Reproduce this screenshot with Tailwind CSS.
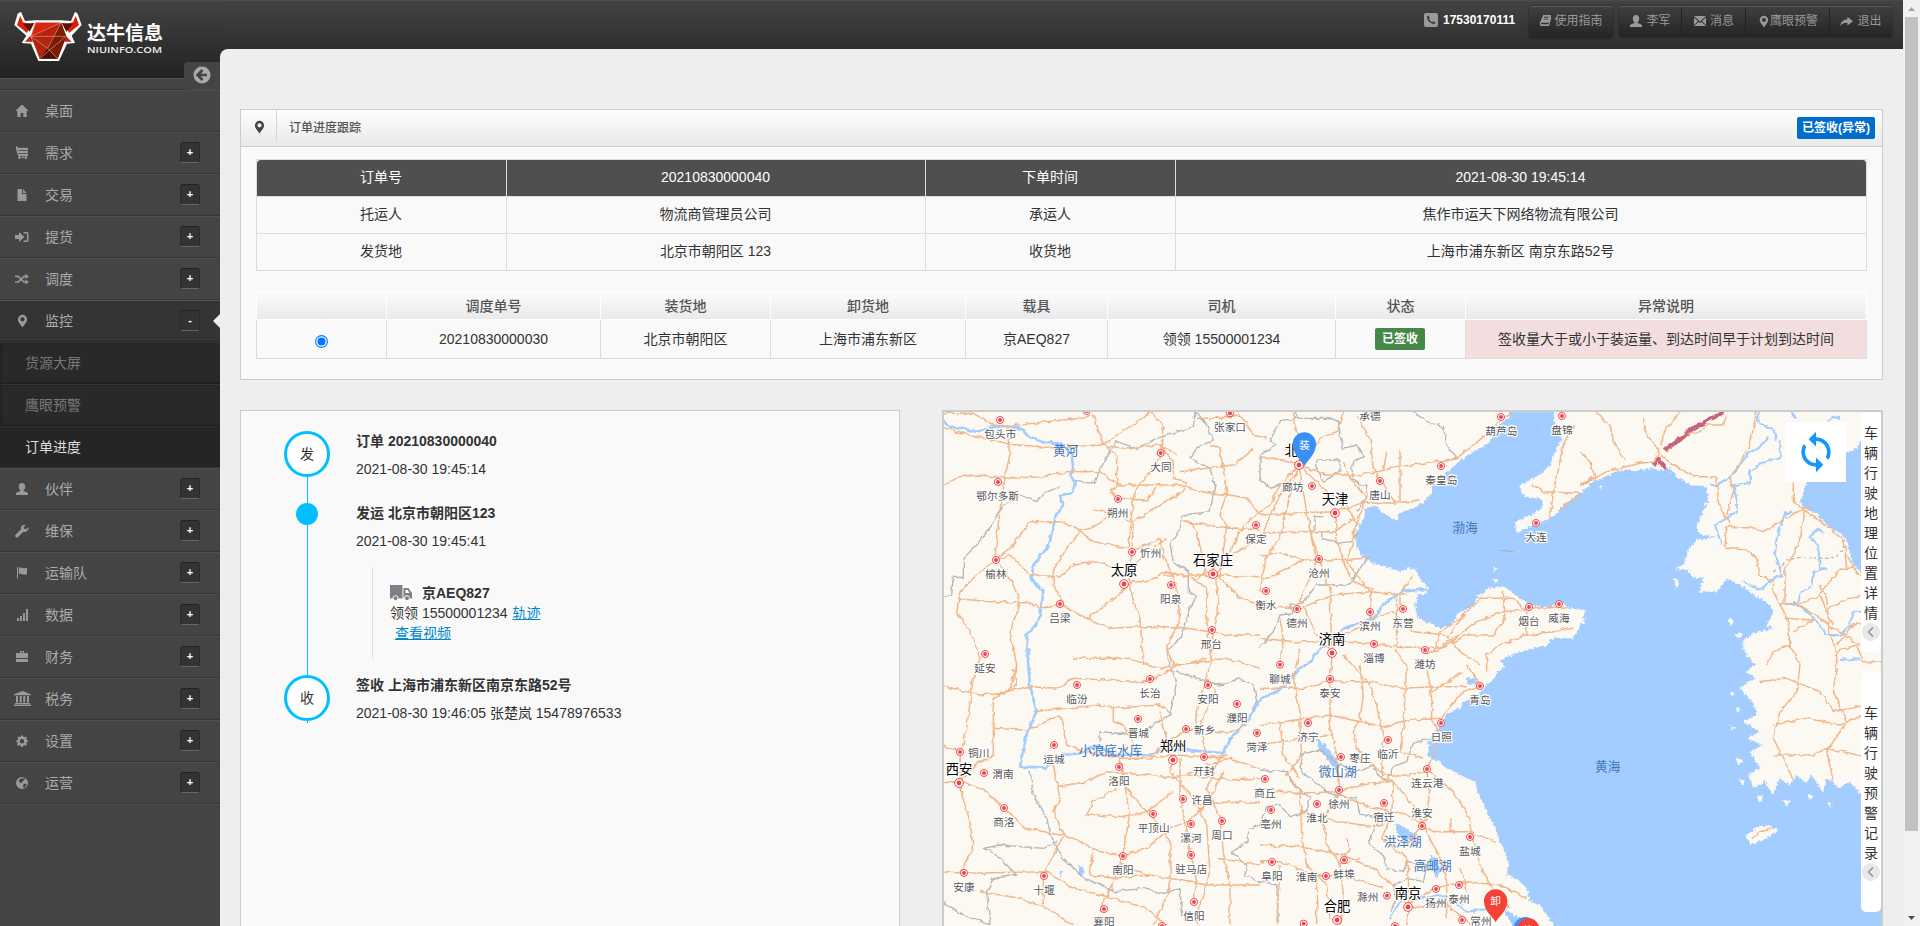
<!DOCTYPE html>
<html lang="zh-CN">
<head>
<meta charset="utf-8">
<title>订单进度跟踪</title>
<script src="https://cdn.jsdelivr.net/npm/@tailwindcss/browser@4"></script>
</head>
<body class="w-[1920px] h-[926px] overflow-hidden bg-[#eee] text-[14px] leading-[20px] text-[#333] font-['Liberation_Sans','Noto_Sans_CJK_SC',sans-serif]">
<svg class="hidden">
  <symbol id="i-home" viewBox="0 0 14 14"><path d="M7 .5 .3 7h2v6h3.400V9h2.600v4h3.400V7h2z"/></symbol>
  <symbol id="i-cart" viewBox="0 0 14 14"><path d="M.8 0h1.300l.6 1.800H13v2.400H3.300v.8H13v2.200H3.500v.8H13v2H3L1 3z"/><circle cx="4.500" cy="11.500" r="1.500"/><circle cx="7.800" cy="11.300" r="1.100"/><circle cx="10.800" cy="11.500" r="1.500"/></symbol>
  <symbol id="i-file" viewBox="0 0 14 14"><path d="M2.500 1H7v5h4.500v7h-9z"/><path d="M8 1l3.500 4H8z"/></symbol>
  <symbol id="i-signin" viewBox="0 0 14 14"><path d="M0 5h4V2l5.500 5L4 12V9H0z"/><path d="M8.500 2H12q1.500 0 1.500 1.500v7Q13.500 12 12 12H8.500v-1.500H12v-7H8.500z"/></symbol>
  <symbol id="i-shuffle" viewBox="0 0 15 14"><path d="M0 4.200h3.500l6 6h2" fill="none" stroke="currentColor" stroke-width="1.800"/><path d="M0 10.200h3.500l6-6h2" fill="none" stroke="currentColor" stroke-width="1.800"/><path d="M11 1.500l4 2.800-4 2.700zM11 7.500l4 2.700-4 2.800z"/></symbol>
  <symbol id="i-pin" viewBox="0 0 14 14"><path fill-rule="evenodd" d="M7.500.8a4.600 4.600 0 0 0-4.600 4.600c0 2.800 3 5 4.600 8 1.600-3 4.600-5.200 4.600-8A4.600 4.600 0 0 0 7.500.8zm0 2.400a2.100 2.100 0 1 1 0 4.200 2.100 2.100 0 0 1 0-4.200z"/></symbol>
  <symbol id="i-user" viewBox="0 0 14 14"><path d="M7 1c2 0 3.200 1.300 3.200 3.400 0 1.600-.6 3-1.500 3.700v1c1 .8 4.300 1.200 4.300 2.500V13H1v-1.400c0-1.300 3.300-1.700 4.300-2.500v-1C4.400 7.400 3.800 6 3.800 4.400 3.800 2.300 5 1 7 1z"/></symbol>
  <symbol id="i-wrench" viewBox="0 0 14 14"><path d="M13.300 3.200 11 5.300 9 4.700 8.600 3 10.900.9C9.200.2 7 .9 6.200 2.600c-.4 1-.4 1.800-.1 2.700L.7 10.500a1.700 1.700 0 0 0 2.500 2.500l5.200-5.200c1 .3 2 .2 3-.3 1.700-.8 2.400-2.600 1.900-4.300z"/></symbol>
  <symbol id="i-flag" viewBox="0 0 14 14"><path d="M2 1h1v11.500H2zM3.800 1.800c2.500-1.300 4 1.400 8.200 0v6.400c-4 1.500-5.700-1.300-8.200 0z"/></symbol>
  <symbol id="i-signal" viewBox="0 0 14 14"><path d="M2 10h2v3H2zM5 8h2v5H5zM8 5h2v8H8zM11 1h2v12h-2z"/></symbol>
  <symbol id="i-case" viewBox="0 0 14 14"><path fill-rule="evenodd" d="M5 3V1h4v2h4v5H1V3zm1 0h2V2H6zM1 9h12v3H1z"/></symbol>
  <symbol id="i-bank" viewBox="0 0 17 15"><path d="M8.500 0 17 3.200v1H0v-1zM2 5h2v6.500H2zM5.700 5h2v6.500h-2zM9.300 5h2v6.500h-2zM13 5h2v6.500h-2zM1 12h15v1H1zM0 13.500h17V15H0z"/></symbol>
  <symbol id="i-cog" viewBox="0 0 14 14"><path fill-rule="evenodd" d="M6 1.500h2l.4 1.300 1 .4 1.400-.7 1.200 1.300-.7 1.300.4 1L13 6.300v1.500l-1.300.5-.4 1 .7 1.300-1.300 1.200-1.300-.6-1 .4L8 13H6l-.4-1.400-1-.4-1.400.6L2 10.600l.7-1.300-.4-1L1.500 8V6.300l1.200-.4.4-1L2.500 3.700 3.700 2.500l1.200.6 1-.3zM7 5a2.200 2.200 0 1 0 0 4.400A2.200 2.200 0 0 0 7 5z"/></symbol>
  <symbol id="i-globe" viewBox="0 0 14 14"><path fill-rule="evenodd" d="M7 1a6 6 0 1 1 0 12A6 6 0 0 1 7 1zM6 2.500l3.500-.2 1.200 1-1.700.5L8 5.500 6.500 6l.2 1.200-2.400-1L4 4zM8.500 8l2.800-.5.4 1.500-2.500 3-1-.5z"/></symbol>
  <symbol id="i-book" viewBox="0 0 14 14"><path fill-rule="evenodd" d="M4.500 1H13L10.800 9.500H3q-1.300.2-1 1.500h8.300L12.500 3l.8.500L11 13H2Q.3 12.500.8 10zM5.500 3l-.3 1h5l.3-1zM5 5l-.3 1h5l.3-1z"/></symbol>
  <symbol id="i-mail" viewBox="0 0 14 14"><path d="M1 2h12L7 7.500zM1 3.500 5 7 1 11zM13 3.500 9 7l4 4zM5.700 7.700 7 8.900l1.300-1.200L13 12H1z"/></symbol>
  <symbol id="i-share" viewBox="0 0 14 14"><path d="M8 2l6 4.700-6 4.600V8.500C4.500 8.300 2 9 .5 12 .8 7.500 3.500 5 8 4.700z"/></symbol>
</svg>

<div class="flex h-[926px] w-[1920px]">
  <!-- sidebar -->
  <aside class="relative h-full w-[220px] shrink-0 bg-[#444]">
    <div class="flex h-[78px] bg-linear-to-b from-[#434343] to-[#222] pl-[13px] pt-[10px] border-t border-[#4c4c4c]">
      <svg class="h-[52px] w-[70px] shrink-0" viewBox="0 0 210 156">
        <path d="M24 2 36 30 68 28H144L174 30 186 2 194 8 206 42 176 74 186 96 162 98 138 150H76L54 98 26 96 40 74 4 42 14 8z" fill="#fff"/>
        <path d="M22 14 30 34 54 40 42 66 12 42zM188 14 180 34 156 40 168 66 198 42z" fill="#d8200c"/>
        <path d="M30 38 64 36 50 62zM180 38 146 36 160 62z" fill="#5a1306"/>
        <path d="M52 74 36 92H60zM158 74 176 92H154z" fill="#c42412"/>
        <path d="M68 35H144L160 76 134 143H80L54 76z" fill="#b02410"/>
        <path d="M68 35H144L54 76z" fill="#d9240f"/><path d="M144 35 160 76 134 143 104 112z" fill="#7a1d04"/><path d="M80 143 104 112 134 143z" fill="#4a1206"/>
        <path d="M54 76 144 35 104 112zM54 76H158L80 143M104 112 134 143M68 35 54 76" fill="none" stroke="#e8907c" stroke-width="2"/>
      </svg>
      <svg class="h-[60px] w-[82px]" viewBox="0 0 82 60"><text x="4" y="28.500" font-size="19" font-weight="700" textLength="76" fill="#fff">达牛信息</text><text x="4" y="42" font-size="8.500" font-weight="600" textLength="75" lengthAdjust="spacingAndGlyphs" fill="#eee" font-family="Open Sans, sans-serif">NIUINFO.COM</text></svg>
    </div>
    <div class="h-[12px] border-b border-t border-b-[#363636] border-t-[#555]"></div>
    <nav id="menu" class="border-b border-[#4f4f4f]"></nav>
    <div class="absolute left-[184px] top-[62px] flex h-[28px] w-[36px] items-center justify-center rounded-l-[4px] bg-[#444] pb-[2px]">
      <svg class="size-[18px]" viewBox="0 0 18 18"><circle cx="9" cy="9" r="8.500" fill="#aaa"/><path d="M9.500 4 4.500 9l5 5M5 9h9" fill="none" stroke="#444" stroke-width="2.600"/></svg>
    </div>
  </aside>

  <div class="flex h-full w-[1683px] flex-col bg-[#eee] bg-[linear-gradient(#434343,#222)] bg-[length:100%_78px] bg-no-repeat">
    <!-- top bar -->
    <header class="flex h-[49px] shrink-0 items-start justify-end border-t border-[#4c4c4c] pr-[11px] text-[12px] text-[#999]">
      <div class="mr-[14px] flex h-[37px] items-center gap-[5px] font-bold text-white">
        <svg class="size-[14px]" viewBox="0 0 14 14"><rect width="14" height="14" rx="2" fill="#999"/><path d="M4.200 2.500 3 3.600c-.3 3.800 3.700 7.800 7.500 7.500l1-1.300-2.200-1.500-1.200.9C6.800 8.500 5.700 7.400 5 6l.9-1.200z" fill="#3a3a3a"/></svg>
        <span class="w-[72px]">17530170111</span>
      </div>
      <a class="mr-[6px] mt-[5px] flex h-[32px] w-[84px] items-center justify-center gap-[2px] rounded-[3px] border-t border-[#5a5a5a] bg-linear-to-b from-[#3f3f3f] to-[#242424] pb-[4px] shadow-[0_0_2px_#1a1a1a]"><svg class="size-[13px] fill-current"><use href="#i-book"/></svg>使用指南</a>
      <div class="mt-[5px] flex h-[31px] rounded-[3px] border-t border-[#5a5a5a] bg-linear-to-b from-[#3f3f3f] to-[#242424] shadow-[0_0_2px_#1a1a1a] *:pb-[2px]">
        <a class="flex w-[63px] items-center justify-center gap-[3px] border-r border-[#222]"><svg class="size-[14px] fill-current"><use href="#i-user"/></svg>李军</a>
        <a class="flex w-[64px] items-center justify-center gap-[3px] border-r border-[#222]"><svg class="size-[14px] fill-current"><use href="#i-mail"/></svg>消息</a>
        <a class="flex w-[84px] items-center justify-center border-r border-[#222]"><svg class="size-[13px] fill-current"><use href="#i-pin"/></svg>鹰眼预警</a>
        <a class="flex w-[62px] items-center justify-center gap-[4px]"><svg class="size-[13px] fill-current"><use href="#i-share"/></svg>退出</a>
      </div>
    </header>

    <main class="min-h-0 flex-1 overflow-hidden rounded-tl-[8px] bg-[#eee] pl-[20px] pt-[60px]">
      <!-- order summary -->
      <section class="h-[271px] w-[1643px] border border-[#ccc] bg-[#f9f9f9]">
        <div class="flex h-[37px] border-b border-[#ccc] bg-linear-to-b from-[#fdfdfd] to-[#e9e9e9]">
          <div class="flex h-[31px] w-[36px] items-center justify-center border-r border-[#d5d5d5] pt-[3px] pl-[1px]"><svg class="size-[14px] fill-[#444]"><use href="#i-pin"/></svg></div>
          <h5 class="pl-[12px] pt-[8px] text-[12px] font-medium text-[#555]">订单进度跟踪</h5>
          <span class="ml-auto mr-[7px] mt-[7px] flex h-[22px] w-[78px] items-center justify-center rounded-[2px] bg-[#006dcc] text-[12px] font-bold text-white">已签收(异常)</span>
        </div>
        <div class="px-[15px] pt-[12px]">
          <div class="grid w-[1611px] grid-cols-[250px_419px_250px_691px] border-l border-t border-[#ddd] text-center *:h-[37px] *:border-b *:border-r *:border-[#ddd] *:pr-[1px] *:pt-[7px]">
            <div class="rounded-tl-[4px] bg-[#4f4f4f] text-white">订单号</div><div class="bg-[#4f4f4f] text-white">20210830000040</div><div class="bg-[#4f4f4f] text-white">下单时间</div><div class="rounded-tr-[4px] bg-[#4f4f4f] text-white">2021-08-30 19:45:14</div>
            <div>托运人</div><div>物流商管理员公司</div><div>承运人</div><div>焦作市运天下网络物流有限公司</div>
            <div>发货地</div><div>北京市朝阳区 123</div><div>收货地</div><div>上海市浦东新区 南京东路52号</div>
          </div>
          <div class="mt-[20px] w-[1611px]">
            <div class="grid h-[29px] grid-cols-[130px_214px_170px_195px_142px_228px_130px_401px] border-l border-t border-white bg-linear-to-b from-[#fcfcfc] to-[#e9e9e9] text-center font-medium text-[#555] *:border-b *:border-r *:border-white *:pt-[4px]">
              <div></div><div>调度单号</div><div>装货地</div><div>卸货地</div><div>载具</div><div>司机</div><div>状态</div><div>异常说明</div>
            </div>
            <div class="grid h-[39px] grid-cols-[130px_214px_170px_195px_142px_228px_130px_401px] border-l border-[#ddd] text-center *:border-b *:border-r *:border-[#ddd] *:pt-[9px]">
              <div class="flex justify-center"><svg class="mt-[6px] size-[13px]" viewBox="0 0 13 13"><circle cx="6.500" cy="6.500" r="5.900" fill="#fff" stroke="#0075ff" stroke-width="1.100"/><circle cx="6.500" cy="6.500" r="4" fill="#0075ff"/></svg></div>
              <div>20210830000030</div><div>北京市朝阳区</div><div>上海市浦东新区</div><div>京AEQ827</div><div>领领 15500001234</div>
              <div class="flex justify-center pr-[1px]"><span class="-mt-[1px] flex h-[22px] w-[50px] items-center justify-center rounded-[2px] bg-[#468847] text-[12px] font-bold text-white">已签收</span></div>
              <div class="bg-[#f2dede]">签收量大于或小于装运量、到达时间早于计划到达时间</div>
            </div>
          </div>
        </div>
      </section>

      <div class="mt-[30px] flex">
        <!-- timeline -->
        <section class="flex h-[540px] w-[660px] border border-[#ccc] bg-[#f9f9f9] pl-[43px] pt-[20px]">
          <div class="flex w-[46px] flex-col items-center">
            <div class="flex size-[46px] items-center justify-center rounded-full border-[3px] border-[#00bfff] bg-white">发</div>
            <div class="h-[26px] w-px bg-[#00bfff]"></div>
            <div class="size-[22px] rounded-full bg-[#00bfff]"></div>
            <div class="h-[150px] w-px bg-[#00bfff]"></div>
            <div class="flex size-[46px] items-center justify-center rounded-full border-[3px] border-[#00bfff] bg-white">收</div>
            <div class="h-[2px] w-px bg-[#00bfff]"></div>
          </div>
          <div class="pl-[26px]">
            <b class="block">订单 20210830000040</b>
            <p class="mt-[8px]">2021-08-30 19:45:14</p>
            <b class="mt-[24px] block">发运 北京市朝阳区123</b>
            <p class="mt-[8px]">2021-08-30 19:45:41</p>
            <div class="ml-[16px] mt-[16px] h-[92px] border-l border-[#ddd] pl-[17px] pt-[16px]">
              <div class="flex items-center"><svg class="mr-[10px] h-[16px] w-[22px]" viewBox="0 0 22 16"><rect width="22" height="16" fill="#fff"/><path fill-rule="evenodd" d="M0 0h12.500v13.500H0zM13.500 3h5L22 8v5.500h-8.500zm2 2v3h4l-1.800-3z" fill="#7d8187"/><circle cx="5.500" cy="13.200" r="2.500" fill="#7d8187" stroke="#fff"/><circle cx="17" cy="13.200" r="2.500" fill="#7d8187" stroke="#fff"/></svg><b>京AEQ827</b></div>
              <p>领领 15500001234 <a class="ml-[1px] text-[#08c] underline">轨迹</a></p>
              <p class="pl-[5px]"><a class="text-[#08c] underline">查看视频</a></p>
            </div>
            <b class="mt-[16px] block">签收 上海市浦东新区南京东路52号</b>
            <p class="mt-[8px]">2021-08-30 19:46:05 张楚岚 15478976533</p>
          </div>
        </section>

        <!-- map -->
        <section class="relative ml-[42px] h-[540px] w-[941px] border-2 border-[#ccc] bg-[#fcf9f2]">
          <svg class="block h-[514px] w-[937px]" viewBox="944 412 937 514">
            <defs>
              <filter id="rough" x="0" y="0" width="1" height="1"><feTurbulence type="fractalNoise" baseFrequency=".12" numOctaves="3" seed="4"/><feDisplacementMap in="SourceGraphic" scale="16" xChannelSelector="R" yChannelSelector="G"/></filter>
              <filter id="wobble" x="0" y="0" width="1" height="1"><feTurbulence type="fractalNoise" baseFrequency=".05" numOctaves="2" seed="9"/><feDisplacementMap in="SourceGraphic" scale="14" xChannelSelector="R" yChannelSelector="G"/></filter>
            </defs>
            <g transform="translate(1260 405) scale(.33333)">
              <g filter="url(#rough)" fill="#a3ccff">
                <path d="M750 0 745 40 715 60 705 90 680 120 640 140 610 160 550 210 520 230 515 265 490 290 460 310 430 320 410 330 415 345 400 345 385 330 365 325 355 305 335 300 315 315 310 345 295 365 285 400 290 430 310 455 340 475 380 485 420 500 440 490 465 492 480 520 505 550 500 565 475 570 465 600 475 640 510 655 540 670 575 660 595 625 640 605 650 575 690 550 735 545 765 570 795 590 830 605 870 605 900 590 930 610 978 616 965 640 958 670 940 700 880 700 860 720 800 735 755 750 720 765 735 785 710 800 705 820 680 840 650 875 610 890 600 910 560 925 545 955 520 990 505 1015 505 1055 540 1070 560 1090 600 1110 645 1130 655 1165 680 1220 705 1270 720 1310 735 1340 745 1380 740 1410 775 1425 800 1450 810 1490 840 1500 860 1530 900 1590H1900V1200L1804 1170 1770 1130 1740 1150 1700 1120 1690 1165 1655 1110 1640 1135 1610 1110 1590 1140 1560 1120 1540 1170 1515 1130 1480 1150 1465 1110 1500 1090 1470 1040 1510 1020 1460 1000 1500 980 1450 950 1490 930 1480 897 1440 850 1485 820 1460 800 1485 780 1450 735 1450 705 1480 685 1540 670 1520 660 1540 620 1520 590 1480 570 1450 545 1400 520 1370 560 1320 560 1330 520 1295 520 1290 500 1245 490 1275 475 1280 440 1310 405 1370 395 1325 390 1310 375 1320 340 1345 290 1340 245 1290 240 1250 215 1230 190 1200 195 1175 190 1140 195 1090 195 1060 205 1000 230 960 265 910 300 890 325 870 340 820 360 785 375 768 385 765 350 800 335 830 320 850 300 840 280 805 280 785 265 780 240 810 225 840 210 870 180 885 140 905 100 895 80 880 40 890 0z"/>
                <path d="M1810 100 1790 130 1760 145 1650 150 1640 235 1620 290 1640 315 1670 325 1700 360 1755 395 1780 480 1830 530V100z"/>
                <path d="M170 1000 190 1015 215 1045 240 1080 230 1100 200 1060 175 1030zM405 1255 425 1260 450 1280 470 1290 440 1310 415 1290zM510 1350 530 1360 545 1395 530 1420 515 1390zM-545 1380-530 1385-530 1410-545 1410zM-600 1395-590 1400-600 1420zM620 820 650 820 650 840 625 838zM730 1510 800 1550 860 1570H760z"/>
                <g fill="#fcf9f2"><path d="M1455 1295 1490 1265 1530 1262 1555 1275 1520 1300 1475 1318zM1405 640l20 8-15 14zM1425 690l22-6-8 20zM940 440l20 3zM1240 520l18 4-8 26zM700 485l10 6-6 10zM695 520l18 4-8 12zM960 645l18-10-8 22zM1330 290l12 8-10 6zM1015 243l12 0-4 8zM1425 905l20 4-12 14zM1410 960l16 8-10 12zM1430 1060l18 6-12 14zM1440 1120l18 10-14 16zM1490 1175l20-4-6 20zM1570 1185l22 4-14 14zM1640 1165l20 8-10 14zM1410 860l14 4-8 10zM1700 1190l18 4-8 14z"/></g>
              </g>
              <g filter="url(#wobble)" fill="none" stroke-linejoin="round">
                <!-- rivers -->
                <g stroke="#a3ccff" stroke-width="8">
                  <path d="M-960 40-930 65-850 80-810 65-725 68-690 95-650 112-590 120-565 150-560 190-570 210-555 235-565 265-600 270-590 300-615 340-620 370-640 430-680 480-685 520-650 560-655 600-665 650-700 690-695 780-690 840-670 920-705 1000-720 1085-640 1088-600 1050-540 1045-490 1020-440 1050-320 1048-290 1030-110 1044-80 990-40 950 5 880 70 850 110 800 150 770 180 730 250 670 340 640 380 590 430 560 500 552"/>
                  <path stroke-width="6" d="M1500 20 1492 50 1540 75 1550 105M1525 95 1500 125 1465 145 1410 220 1370 240 1350 240M1562 105 1560 160 1500 175 1470 200 1470 235 1420 240 1432 290 1430 320 1365 360 1385 420M1595 320 1575 325 1550 400 1545 450 1560 490 1565 510 1525 530 1505 555 1450 530M1695 385 1670 370 1650 395 1675 425 1680 490 1700 490 1660 500 1655 540 1625 560 1610 600 1570 595M1600 590 1640 620 1670 650 1700 690 1740 690 1770 660 1780 620 1810 620M1590 10 1605 40M1700 50 1720 35 1740 40M1740 765 1800 760M390 1540 420 1490 480 1480 560 1470 620 1520 700 1510"/>
                </g>
                <!-- provincial boundaries -->
                <g stroke="#b4b6b8" stroke-width="4">
                  <path d="M-195 20-200 65-310 100-370 130-430 110-480 190-495 235-555 230M-600 245-650 265-670 290-720 270-770 300-800 350-850 420-890 460-890 520-920 510-925 570-960 575M-195 20-160 60-140 105-190 130-210 160-150 190-135 240-150 320-230 330-240 370-270 420-260 470-215 500-215 560-190 570-220 640-240 700-280 740-270 780-250 830-270 930-320 960-360 990-480 980-480 1010M-690 1100-680 1170-640 1240-620 1310-590 1360-530 1420-470 1440-440 1460-350 1450-290 1465-240 1450-235 1530M-610 1310-650 1330-780 1320-830 1330-790 1350-730 1410-800 1420-820 1460-810 1560-890 1530-960 1490M-255 800-120 840-60 820-20 840-10 890-30 930"/>
                  <path d="M110 20 110 40 200 40 235 45 240 90 250 130 290 120 310 155 280 170 275 220 300 240 320 240 320 280 290 320M30 100 60 50 110 40M30 100 50 120 0 150 0 220 30 250 75 230M170 165 240 165 240 200 190 230 170 190zM165 335H185V330M165 335V380H185V400L240 415 280 405 290 380M460 20 500 50 550 65 560 120 590 160M325 455 300 490 280 520 270 540H170L130 590 90 600 100 625 60 630 40 680 0 725M510 1000 460 1015 440 1070 400 1085 380 1130 355 1110 340 1080 280 1100 210 1060 180 1035 130 1045 120 1090 140 1110 190 1150 210 1170 290 1180 300 1230 360 1240 335 1290 330 1320 370 1350 380 1390 430 1400 440 1370 500 1380 490 1430 440 1420 400 1440 410 1480 390 1520M0 1095 80 1100 90 1130 150 1180 140 1220 90 1235 60 1200 20 1205 0 1260-30 1270-40 1310-85 1340-40 1380-45 1410 0 1430 50 1440 55 1550"/>
                  <path d="M1540 500 1555 490 1580 465 1620 457 1700 460 1730 455 1750 430 1752 405" stroke-dasharray="9 8"/>
                </g>
                <path d="M1390 22 1345 45 1300 70 1280 85 1250 110 1215 135M1180 180 1195 160 1215 190" stroke="#c76578" stroke-width="12"/>
                <!-- roads -->
                <g stroke="#f1b78b" stroke-width="4.400">
                  <path d="M-960 65-870 90-750 118-620 128-480 120-410 130-300 120-250 150M-960 245-900 215-840 210-760 220-650 215-580 200-480 200-430 240-240 240-180 260-90 270-40 280 0 330M-950 25-860 25-800 60-760 65-640 50-540 40-500 30-470 120-430 150-430 240-445 260-430 280-340 285-300 235M-760 60-750 150-770 230-790 400-795 465-850 510-900 560-910 620-860 700-840 760-860 820-880 970-900 1060-900 1150-870 1250-860 1330-900 1400-890 1410M-795 465-740 420-690 350-600 350-540 375-490 360-440 320M-795 465-750 450-690 510-600 515-560 480-480 470-440 490-380 480-340 445-280 400M-780 480-740 540-720 590-750 680-730 780-750 850M-910 580-820 590-700 590-660 610-590 600-520 640-450 670-350 665-250 665-150 680-100 690 0 690M-590 590-620 540-620 500-580 430-540 380-500 410-440 420-400 430M-395 430-380 280-370 250-300 160-290 60-330 20M-470 120-380 60-330 20M-300 120-260 170-260 220-220 230-230 260-280 290-380 350M-500 310-380 350-385 440-390 530-380 590-360 640-350 780M-385 440-300 400-290 450-250 540-240 650-280 720-260 780M-290 510-200 510-150 515-130 510 0 515M-520 640-450 590-380 530-340 530-280 500-200 520-160 550-160 640-150 740M-160 515-190 380-200 360-230 350M-230 350-120 365 0 375M-190 40-120 40-60 30-20 90 20 100M-130 510-80 420-50 360 0 320M-130 510-125 620-140 680-150 780-180 880-200 980M-130 510-60 580 0 600M-120 520-100 360-120 330-100 260-120 130-150 120M-200 530-100 460 0 400 60 270 110 200M-240 200-160 190-80 180-20 130M-960 1020-900 1040-890 1130-960 1130M-900 1130-850 1080-800 1050-800 980-800 880-730 840-740 790M-960 840-840 870-760 860-700 845-600 850-560 820-460 825-340 830-240 780-160 760M-680 920-580 910-480 900-440 910-300 900-270 920M-800 970-700 975-600 930-580 1020-530 1040-420 1060-340 1060-260 1050-160 1055-100 1060 0 1090M-890 1130-820 1160-770 1210-700 1270-600 1290-560 1300-480 1340-410 1350-340 1330-270 1270-220 1250-150 1190-110 1100M-620 1080-600 1180-620 1220-590 1290-640 1390-650 1410-650 1500M-610 1145-520 1130-460 1100-340 1110-260 1120-200 1100-160 1080-80 1060M-420 1060-400 1150-360 1200-290 1270-270 1320-270 1450-320 1560M-420 1070-390 1220-410 1340-410 1350-440 1430-480 1520M-260 1060-270 1100-200 1180-160 1260-150 1400-180 1500-190 1560M-240 1060-240 1160-220 1290-190 1430-200 1500M-520 1230-500 1190-430 1150M-520 1230-400 1235-340 1220-260 1160M-960 1400-880 1405-640 1400-560 1450-440 1480-340 1510-280 1560M-840 1460-720 1480-640 1510-560 1560M-500 1340-510 1410-440 1420-330 1410-160 1440 0 1440M-420 1380-330 1410M-130 1360 0 1380M-120 1060-160 1150-120 1240-110 1340-90 1450-90 1560M-560 760-400 760-300 790-250 780-100 760 0 790M-300 920-280 1000-330 1060M-440 910-440 950-410 960-380 1020M-280 1010-220 975-180 970-100 985-40 960M-130 850-180 960-160 1060-100 1050M-220 1110-90 1125 0 1120M-200 1200-80 1190 0 1195"/>
                  <path d="M117 180 60 240 30 300 0 320M117 180 90 270 60 400 20 450 0 560M117 180 130 260 150 380 170 440 210 560 215 730M117 180 200 260 260 300 290 360M117 180 200 210 300 210 420 185 520 170 590 160 690 80 750 20M117 180 40 160 0 160M117 180 110 80 100 20M117 180 180 100 230 80 250 20M290 30 330 100 340 190 370 240 410 300M420 130 420 290M380 140 370 200M250 170 270 220 320 280 300 330 280 380 280 420 260 470 290 510 330 560 330 650M0 330 90 325 225 320 320 290 400 295 480 285M0 385 110 380 225 380 280 340M0 450 60 445 130 465 220 465 320 460M0 530 60 500 130 465M0 600 120 610 220 570 330 560 440 570M130 600 170 690 216 744M110 610 170 470 150 380M225 325 230 400 250 470 280 530 340 555M0 700 110 710 216 710 330 715 440 730 540 725 600 690 650 650 730 620 840 610 930 605M60 780 70 700 60 640M330 655 220 700M330 640 400 620 460 680 560 690 600 740 660 780M410 580 410 740 440 780M460 510 420 570 420 600M560 700 620 620 660 580 760 580 800 620 800 690 720 720 680 750 680 800M730 560 735 640 700 690 620 690 560 720 500 750M800 690 880 680 940 670M520 740 540 680 620 630M120 730 100 820 120 920 120 960 125 1050 80 1110 120 1160 125 1290 140 1380 200 1440 210 1540M0 850 130 850 210 830 330 830 420 850 520 845 620 845M216 750 210 830 210 960 230 1050 240 1160 190 1240 200 1320 240 1380 250 1470 240 1560M250 750 330 840 350 900 370 1000 365 1120 400 1130 395 1230 365 1300 440 1360 450 1500 440 1560M440 780 430 960 420 1040 490 1060M500 780 515 880 515 940 540 1000 500 1090M515 860 610 800M0 960 70 950 210 930 300 950 370 965 460 945 540 940M540 940 610 860 660 840M300 780 310 870 300 940 280 980 290 1030 370 1110 440 1110 500 1100M400 1130 460 1200 500 1280 540 1360 560 1430 560 1540M400 1130 300 1140 240 1160 100 1165 0 1150M240 1170 340 1210 440 1230 520 1280 620 1280 710 1310M510 1100 580 1160 630 1240 640 1300 660 1380 700 1460 750 1510M500 1090 510 1180 500 1240 440 1320M0 1320 120 1325 250 1350 340 1390 420 1460 440 1500M0 1370 60 1370 160 1410 280 1420 370 1450M60 1380 50 1560M120 1220 240 1250 340 1265 370 1260M440 1500 520 1450 620 1430 720 1440 800 1480M440 1510 560 1500 640 1560M570 1240 570 1280M600 1390 620 1450 610 1500M240 1380 300 1360M0 1020 60 1010 140 1000 220 990M60 950 70 1050 120 1120M170 1560 170 1400M260 1300 270 1330 250 1370M620 780 660 840"/>
                  <path d="M960 140 990 170 1005 215 960 240M960 245 1040 200 1140 175 1180 170 1200 135 1160 90 1150 40M1010 20 1050 60 1060 110 1095 170M1200 150 1240 180 1300 215 1370 215 1375 290 1400 340 1410 360M1205 130 1210 80 1260 20M1280 85 1320 80 1340 60 1390 60 1400 30M1490 20 1470 120 1410 220 1420 260 1400 330M1400 365 1460 365 1510 380 1600 325 1650 305M1400 365 1395 430 1460 435 1490 460 1500 510 1540 530 1540 560 1560 600M1600 235 1600 290 1640 320 1700 365 1750 400 1760 450 1780 490 1810 520M1635 320 1620 400 1600 450 1575 490 1575 590M1560 600 1640 590 1680 570 1740 490 1790 490M1560 600 1585 650 1590 720 1620 780M1600 590 1680 640 1720 670 1800 720M1680 570 1700 620 1720 660M1700 610 1800 570M1570 640 1660 645 1600 680M1520 780 1540 740 1590 720M1680 540 1700 580 1710 690 1730 740 1730 780M1730 740 1790 720 1810 770 1880 770M1760 490 1755 440M1730 720 1780 660 1830 650M1500 830 1580 820 1680 860 1720 920 1820 900M1620 780 1610 860 1560 920 1540 1000 1580 1080 1600 1130M1730 780 1720 860 1760 950 1700 1040 1720 1130M1540 960 1640 940 1740 960 1840 920M1540 1050 1660 1050 1700 1030 1840 1060M1475 1300 1500 1280 1535 1272M870 340 880 260 910 120 940 60M890 320 960 270M815 240 850 260 960 265"/>
                </g>
              </g>
              <path d="M720 436 760 440" stroke="#aaa" stroke-width="3"/>
              <g id="places"></g>
              <!-- pins -->
              <path d="M133 184c-5-14-35-34-35-67a35 35 0 1 1 70 0c0 33-30 53-35 67z" fill="#3a8ff7"/><text x="133" y="132" font-size="32" fill="#fff" text-anchor="middle">装</text>
              <path d="M707 1552c-5-14-35-32-35-64a35 35 0 1 1 70 0c0 32-30 50-35 64z" fill="#f44336"/><text x="707" y="1500" font-size="32" fill="#fff" text-anchor="middle">卸</text>
              <circle cx="796" cy="1572" r="36" fill="#3a8ff7"/><circle cx="805" cy="1574" r="34" fill="#f44336"/><text x="805" y="1586" font-size="32" fill="#fff" text-anchor="middle">终</text>
            </g>
          </svg>
          <button class="absolute left-[842px] top-[10px] flex size-[60px] items-center justify-center bg-white">
            <svg class="size-[44px] fill-[#1296ff]" viewBox="0 0 24 24"><path d="M12 4V1L8 5l4 4V6c3.310 0 6 2.690 6 6 0 1.010-.25 1.970-.7 2.800l1.460 1.460C19.540 15.030 20 13.570 20 12c0-4.420-3.580-8-8-8zm0 14c-3.310 0-6-2.690-6-6 0-1.010.25-1.970.7-2.800L5.240 7.740C4.460 8.970 4 10.430 4 12c0 4.420 3.580 8 8 8v3l4-4-4-4v3z"/></svg>
          </button>
          <div class="absolute right-0 top-0 flex w-[20px] flex-col gap-[20px] text-center">
            <div class="flex h-[240px] flex-col items-center justify-center rounded-[5px] bg-white"><span class="w-[14px] break-all leading-[20px]">车辆行驶地理位置详情</span><svg class="size-[18px]" viewBox="0 0 18 18"><circle cx="9" cy="9" r="9" fill="#e8e8e8"/><path d="M11 4.500 6.500 9l4.500 4.500" fill="none" stroke="#888" stroke-width="1.200"/></svg></div>
            <div class="flex h-[240px] flex-col items-center justify-center rounded-[5px] bg-white"><span class="w-[14px] break-all leading-[20px]">车辆行驶预警记录</span><svg class="size-[18px]" viewBox="0 0 18 18"><circle cx="9" cy="9" r="9" fill="#e8e8e8"/><path d="M11 4.500 6.500 9l4.500 4.500" fill="none" stroke="#888" stroke-width="1.200"/></svg></div>
          </div>
        </section>
      </div>
    </main>
  </div>

  <!-- scrollbar -->
  <div class="flex h-full w-[17px] flex-col items-center justify-between bg-[#f1f1f1]">
    <svg class="h-[17px] w-[17px]" viewBox="0 0 17 17"><path d="M8.500 7 12 11H5z" fill="#a3a3a3"/></svg>
    <div class="mb-auto h-[814px] w-[13px] bg-[#c1c1c1]"></div>
    <svg class="h-[17px] w-[17px]" viewBox="0 0 17 17"><path d="M8.500 11 12 7H5z" fill="#505050"/></svg>
  </div>
</div>

<script>
// Sidebar: [icon, label, kind]
const menu = [['home','桌面','plain'],['cart','需求'],['file','交易'],['signin','提货'],['shuffle','调度'],['pin','监控','open'],['','货源大屏','sub'],['','鹰眼预警','sub'],['','订单进度','current'],['user','伙伴'],['wrench','维保'],['flag','运输队'],['signal','数据'],['case','财务'],['bank','税务'],['cog','设置'],['globe','运营']];
document.getElementById('menu').innerHTML = menu.map(([icon, label, kind]) => {
  if (kind === 'sub') return `<a class="flex h-[42px] items-center border-b border-t border-b-[#1e1e1e] border-t-[#353535] bg-[#292929] pb-px pl-[25px] text-[#777] shadow-[inset_1px_0_2px_#1e1e1e]">${label}</a>`;
  if (kind === 'current') return `<a class="flex h-[42px] items-center border-b border-t border-b-[#333] border-t-[#303030] bg-[#252525] pb-px pl-[25px] text-[#ddd]">${label}</a>`;
  const svg = icon === 'bank' ? '<svg class="-ml-px h-[15px] w-[17px] fill-[#999]"><use href="#i-bank"/></svg>' : `<svg class="size-[14px] fill-[#999] text-[#999]"><use href="#i-${icon}"/></svg>`;
  const toggle = kind === 'plain' ? '' : `<span class="ml-auto mr-[20px] flex h-[21px] w-[20px] items-center justify-center rounded-[3px] border border-b-[#666] border-l-[#2b2b2b] border-r-[#2b2b2b] border-t-[#222] bg-[#333] pb-px text-[11px] font-bold leading-none text-white">${kind === 'open' ? '-' : '+'}</span>`;
  const cls = kind === 'open' ? 'relative flex h-[42px] items-center border-b border-t border-b-[#2a2a2a] border-t-[#555] bg-[#343434] pb-px pl-[15px] text-[#aaa]' : 'flex h-[42px] items-center border-b border-t border-b-[#363636] border-t-[#4f4f4f] pb-px pl-[15px] text-[#aaa]';
  return `<a class="${cls}"><span class="flex w-[30px]">${svg}</span>${label}${toggle}${kind === 'open' ? '<i class="absolute right-0 top-[13px] border-y-[7px] border-r-[7px] border-y-transparent border-r-[#eee]"></i>' : ''}</a>`;
}).join('');

// Places: name, marker x, marker y, label x, label y, size (s = city, b = capital, w = water)
const places = `,-520,18,0,0,s|包头市,-780,45,-779,88,s|鄂尔多斯,-786,231,-787,273,s|大同,-298,144,-297,187,s|张家口,-90,25,-90,67,s|朔州,-426,282,-427,324,s|保定,-12,360,-12,402,s|忻州,-384,441,-328,444,s|榆林,-792,465,-792,508,s|吕梁,-600,597,-600,639,s|阳泉,-267,540,-268,583,s|邢台,-144,675,-146,717,s|延安,-825,747,-825,790,s|太原,-408,537,-408,496,b|石家庄,-141,507,-141,466,b|黄河,,,-583,138,w|衡水,18,558,18,600,s|承德,,,330,35,s|葫芦岛,723,36,724,80,s|盘锦,906,33,906,77,s|秦皇岛,543,183,544,226,s|廊坊,156,243,98,247,s|唐山,360,228,360,271,s|大连,828,354,828,397,s|沧州,177,462,177,505,s|德州,111,612,111,655,s|滨州,330,621,330,664,s|东营,429,612,429,655,s|烟台,807,606,807,649,s|威海,897,597,897,640,s|淄博,342,717,342,760,s|潍坊,495,735,495,777,s|聊城,60,779,60,822,s|北京,117,180,114,136,b|天津,225,324,225,283,b|济南,216,744,216,703,b|渤海,,,615,368,w|泰安,210,822,210,865,s|青岛,660,843,660,886,s|日照,543,954,544,997,s|济宁,144,954,144,997,s|临沂,384,1005,384,1048,s|枣庄,243,1056,300,1060,s|微山湖,,,233,1100,w|连云港,501,1092,502,1136,s|徐州,237,1155,237,1198,s|商丘,15,1122,15,1165,s|亳州,33,1215,33,1258,s|淮北,171,1197,171,1240,s|宿迁,372,1194,372,1238,s|淮安,486,1263,486,1225,s|洪泽湖,,,428,1310,w|盐城,630,1296,630,1340,s|高邮湖,,,518,1382,w|蚌埠,252,1365,252,1408,s|阜阳,36,1371,36,1414,s|淮南,198,1413,140,1417,s|扬州,528,1452,528,1495,s|泰州,597,1440,597,1483,s|滁州,381,1472,323,1477,s|南京,444,1506,444,1465,b|合肥,231,1545,231,1504,b|常州,606,1545,663,1549,s|菏泽,-9,984,-9,1027,s|临汾,-549,840,-549,883,s|长治,-330,822,-330,865,s|安阳,-156,840,-156,883,s|濮阳,-69,897,-69,940,s|晋城,-366,942,-365,985,s|新乡,-222,972,-166,975,s|铜川,-900,1041,-844,1044,s|运城,-618,1020,-618,1063,s|渭南,-828,1104,-771,1108,s|西安,-903,1134,-903,1094,b|郑州,-261,1065,-261,1024,b|开封,-168,1056,-168,1099,s|洛阳,-423,1086,-423,1129,s|许昌,-231,1182,-174,1185,s|平顶山,-321,1227,-319,1270,s|漯河,-207,1257,-207,1300,s|周口,-114,1248,-114,1292,s|商洛,-768,1209,-768,1252,s|南阳,-411,1353,-411,1396,s|驻马店,-207,1350,-206,1392,s|安康,-888,1404,-888,1447,s|十堰,-648,1413,-648,1456,s|襄阳,-468,1512,-468,1553,s|信阳,-198,1491,-198,1535,s|小浪底水库,,,-448,1038,w|黄海,,,1043,1085,w|,131,1556,0,0,s|,-294,1563,0,0,s|,405,1563,0,0,s`;
document.getElementById('places').innerHTML = places.split('|').map(p => {
  const [name, mx, my, lx, ly, k] = p.split(',');
  const size = k === 'b' ? 40 : k === 'w' ? 38 : 32;
  const fill = k === 'b' ? '#000' : k === 'w' ? '#3f77bd' : '#555';
  const r = k === 'b' ? 13 : 10.5;
  const halo = k === 'w' ? '' : 'stroke="#fff" stroke-width="7" stroke-linejoin="round" paint-order="stroke"';
  const dot = mx ? `<circle cx="${mx}" cy="${my}" r="${r}" fill="#fff" stroke="#e8474c" stroke-width="3"/><circle cx="${mx}" cy="${my}" r="${r / 1.8}" fill="#f04048"/>` : '';
  const label = name ? `<text x="${lx}" y="${+ly + size * .35}" font-size="${size}" fill="${fill}" text-anchor="middle" ${halo}>${name}</text>` : '';
  return dot + label;
}).join('');
</script>
</body>
</html>
